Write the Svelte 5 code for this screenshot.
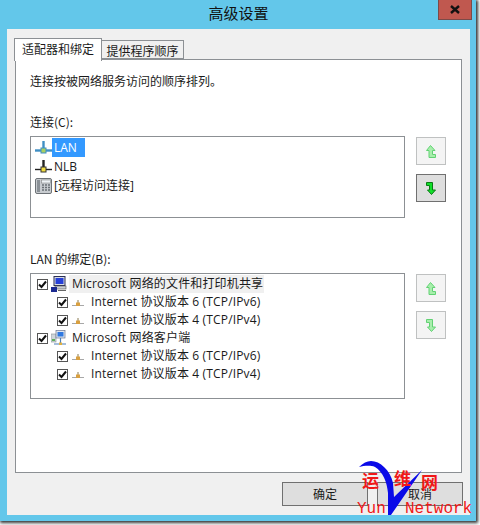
<script>
  const connections = [
    { name: 'LAN', icon: 'net', color: '#3f8fc4', sel: true },
    { name: 'NLB', icon: 'net', color: '#222', sel: false },
    { name: '[远程访问连接]', icon: 'phone', sel: false }
  ];
  const bindings = [
    { name: 'Microsoft 网络的文件和打印机共享', icon: 'pc', top: true, hl: true },
    { name: 'Internet 协议版本 6 (TCP/IPv6)' },
    { name: 'Internet 协议版本 4 (TCP/IPv4)' },
    { name: 'Microsoft 网络客户端', icon: 'client', top: true },
    { name: 'Internet 协议版本 6 (TCP/IPv6)' },
    { name: 'Internet 协议版本 4 (TCP/IPv4)' }
  ];
</script>

{#snippet up()}
  <svg width="10" height="13" viewBox="0 0 10 13"><path d="M4.500 .5 9 5.500H6.500V9.500H9.500V12.500H3V5.500H.5Z" fill="#a8eeac" stroke="#62d274"/></svg>
{/snippet}
{#snippet down(fill, stroke)}
  <svg width="10" height="13" viewBox="0 0 10 13"><path d="M.5 .5H6.500V8H9.500L5.500 12.500 1.500 8H3.500V3.500H.5Z" {fill} {stroke}/></svg>
{/snippet}
{#snippet check()}
  <span class="check"><svg width="9" height="9" viewBox="0 0 9 9"><path d="M1 4.500 3.500 7 8 1.500" fill="none" stroke="#111" stroke-width="2"/></svg></span>
{/snippet}
{#snippet proto()}
  <svg width="12" height="7" viewBox="0 0 12 7"><path d="M0 5.500H12" stroke="#a8a8a8"/><path d="M6 0V3" stroke="#8a7a50"/><rect x="4" y="2.500" width="4" height="3.500" fill="#d9a040"/></svg>
{/snippet}

<div class="frame">
  <div class="window">
    <header class="titlebar">
      <span class="title">高级设置</span>
      <span class="close"><svg width="10" height="9" viewBox="0 0 10 9"><path d="M1 1 9 8M9 1 1 8" stroke="#111" stroke-width="2.400"/></svg></span>
    </header>

    <div class="body">
      <div class="tabs">
        <span class="tab active">适配器和绑定</span>
        <span class="tab">提供程序顺序</span>
      </div>
      <section class="page">
        <p class="intro">连接按被网络服务访问的顺序排列。</p>
        <p class="label first">连接(C):</p>
        <div class="group">
          <div class="list">
            {#each connections as c}
              <div class="row conn">
                {#if c.icon === 'net'}
                  <svg class="ic" width="17" height="14" viewBox="0 0 17 14"><path d="M0 9.500H17" stroke={c.color} stroke-width={c.sel ? 2.400 : 1.400}/><path d="M8.500 0V8" stroke={c.color} stroke-width="2.400"/><rect x="6" y="7" width="5" height="5" fill={c.sel ? '#a8d060' : '#f2dc40'} stroke={c.sel ? '#3f8fc4' : '#333'}/></svg>
                {:else}
                  <svg class="ic" width="17" height="16" viewBox="0 0 17 16"><rect x=".5" y=".5" width="16" height="15" rx="1.500" fill="#c8ccd0" stroke="#6d7277"/><rect x="2" y="2" width="3" height="12" fill="#8a9096"/><rect x="6.500" y="2" width="9" height="3" fill="#eef3f6" stroke="#777" stroke-width=".5"/><path d="M7 7H9M10 7H12M13 7H15M7 9.500H9M10 9.500H12M13 9.500H15M7 12H9M10 12H12M13 12H15" stroke="#6a7075" stroke-width="1.300"/></svg>
                {/if}
                <span class="name" class:selected={c.sel}>{c.name}</span>
              </div>
            {/each}
          </div>
          <div class="side">
            <span class="arrow dim">{@render up()}</span>
            <span class="arrow on">{@render down('#12e02a', '#0a7a14')}</span>
          </div>
        </div>

        <p class="label second">LAN 的绑定(B):</p>
        <div class="group">
          <div class="list tall">
            {#each bindings as b}
              <div class="row bind" class:child={!b.top}>
                {@render check()}
                {#if b.icon === 'pc'}
                  <svg class="bi" width="16" height="16" viewBox="0 0 16 16"><rect x="3" y=".5" width="11" height="9" fill="#d8dce2" stroke="#2a2f55"/><rect x="4.500" y="2" width="8" height="6" fill="#2740d8"/><rect x="4" y="10" width="11" height="3" fill="#c9cdd2" stroke="#555" stroke-width=".6"/><rect x="0" y="11" width="6" height="5" fill="#1c2a90"/><path d="M7 14.500H15" stroke="#666"/></svg>
                {:else if b.icon === 'client'}
                  <svg class="bi" width="16" height="16" viewBox="0 0 16 16"><rect x="0" y="4" width="5" height="8" fill="#cfd6da" stroke="#8b9296" stroke-width=".6"/><rect x="1" y="9" width="3" height="2" fill="#5fae5a"/><rect x="5" y=".5" width="9" height="7.500" fill="#dfe6f0" stroke="#6b7690" stroke-width=".7"/><rect x="6.500" y="2" width="6" height="4.500" fill="#2f78e0"/><path d="M9.500 8V13M3 14H15" stroke="#4d7fb8" stroke-width="1.200"/><rect x="8" y="12.500" width="3" height="2.500" fill="#e0b040"/></svg>
                {:else}
                  <span class="pi">{@render proto()}</span>
                {/if}
                <span class="bname" class:top={b.top} class:hl={b.hl}>{b.name}</span>
              </div>
            {/each}
          </div>
          <div class="side">
            <span class="arrow dim">{@render up()}</span>
            <span class="arrow dim">{@render down('#a8eeac', '#62d274')}</span>
          </div>
        </div>
      </section>
      <footer class="footer">
        <span class="btn">确定</span>
        <span class="btn">取消</span>
      </footer>
    </div>

    <div class="mark">
      <svg class="vee" width="66" height="56" viewBox="0 0 66 56"><path d="M1 7C5 3 9 1 13 1 22 1 32 10 35 23L36 37 64 10 33 55H30V33C29 22 25 12 17 7 12 5 6 6 1 7Z" fill="#0a0ae8"/></svg>
      <span class="cn a">运</span><span class="cn b">维</span><span class="cn c">网</span>
      <span class="en d">Yun</span><span class="en e">Network</span>
    </div>
  </div>
</div>

<style>
  :global(body) { margin: 0; background: #fff; }
  .frame { width: 480px; height: 525px; overflow: hidden; }
  .window {
    position: relative;
    width: 476px;
    height: 521px;
    box-sizing: border-box;
    background: #63c7ea;
    padding: 0 6px 6px 7px;
    display: flex;
    flex-direction: column;
    box-shadow: 1px 1px 3px 1px #333;
    font: 12px "Open Sans", "Noto Sans CJK SC", sans-serif;
    color: #1a1a1a;
  }
  .titlebar { height: 29px; flex: none; position: relative; display: flex; justify-content: center; }
  .title { font: 15px/26px "Noto Sans CJK SC", sans-serif; color: #111; }
  .close {
    position: absolute;
    right: -2px;
    top: 0;
    width: 34px;
    height: 20px;
    box-sizing: border-box;
    background: #c0584f;
    border: 1px solid #7c4a48;
    border-top: 0;
    display: flex;
    align-items: center;
    justify-content: center;
  }
  .body { flex: 1; background: #f0f0f0; padding: 8px 8px 0 7px; display: flex; flex-direction: column; min-height: 0; }
  .tabs { display: flex; height: 23px; align-items: flex-end; flex: none; position: relative; z-index: 1; }
  .tab {
    height: 19px;
    width: 82px;
    box-sizing: border-box;
    background: #f0f0f0;
    border: 1px solid #8c9094;
    border-left: 0;
    margin-bottom: 1px;
    text-align: center;
    font: 12px/19px "Noto Sans CJK SC", sans-serif;
  }
  .tab.active {
    height: 23px;
    width: 88px;
    background: #fff;
    border-left: 1px solid #8c9094;
    border-bottom: 0;
    margin-bottom: -1px;
    line-height: 20px;
  }
  .page {
    height: 414px;
    box-sizing: border-box;
    margin: -1px 0 0 1px;
    background: #fff;
    border: 1px solid #8c9094;
    padding: 12px 15px 0 14px;
    width: 447px;
  }
  p { margin: 0; font: 12px/18px "Noto Sans CJK SC", sans-serif; }
  .label.first { margin-top: 23px; }
  .label.second { margin-top: 32px; }
  .group { display: flex; margin-top: 5px; }
  .list { width: 375px; height: 82px; box-sizing: border-box; border: 1px solid #8c9094; padding-top: 1px; flex: none; }
  .list.tall { height: 126px; }
  .row { display: flex; align-items: center; }
  .conn { height: 19px; padding-left: 4px; }
  .ic { flex: none; width: 17px; }
  .name { padding: 0 2px; line-height: 19px; }
  .name.selected { background: #3399ff; color: #fff; padding-right: 8px; }
  .bind { height: 18px; padding-left: 6px; }
  .bind.child { padding-left: 26px; }
  .check { width: 11px; height: 11px; box-sizing: border-box; border: 1px solid #555; background: #fff; display: flex; align-items: center; justify-content: center; flex: none; }
  .bi { margin-left: 3px; flex: none; }
  .pi { margin: 2px 0 0 4px; width: 12px; height: 7px; display: flex; flex: none; }
  .bname { margin-left: 7px; line-height: 18px; white-space: nowrap; letter-spacing: .15px; }
  .bname.top { margin-left: 5px; }
  .bname.hl { background: #f0f0f0; margin-left: 2px; padding: 0 1px 0 3px; }
  .side { display: flex; flex-direction: column; gap: 9px; margin-left: 11px; padding-top: 1px; }
  .arrow { width: 30px; height: 28px; box-sizing: border-box; display: flex; align-items: center; justify-content: center; }
  .arrow.dim { background: #f4f4f4; border: 1px solid #bfc1c1; }
  .arrow.on { background: #dedede; border: 1px solid #707070; }
  .footer { display: flex; justify-content: flex-end; gap: 9px; padding: 9px 0 0; margin-right: -1px; }
  .btn { width: 86px; height: 24px; box-sizing: border-box; background: #dedede; border: 1px solid #707070; text-align: center; font: 12px/21px "Noto Sans CJK SC", sans-serif; }
  .mark { position: absolute; left: 355px; top: 458px; width: 122px; height: 64px; pointer-events: none; }
  .vee { position: absolute; left: 3px; top: 2px; }
  .cn { position: absolute; color: #f01818; font: bold 17px/17px "Noto Sans CJK SC", sans-serif; }
  .a { left: 7px; top: 13px; }
  .b { left: 39px; top: 11px; }
  .c { left: 66px; top: 15px; }
  .en { position: absolute; color: #f01818; font: 16px/16px "Liberation Mono", monospace; top: 43px; }
  .d { left: 2px; }
  .e { left: 50px; }
</style>
